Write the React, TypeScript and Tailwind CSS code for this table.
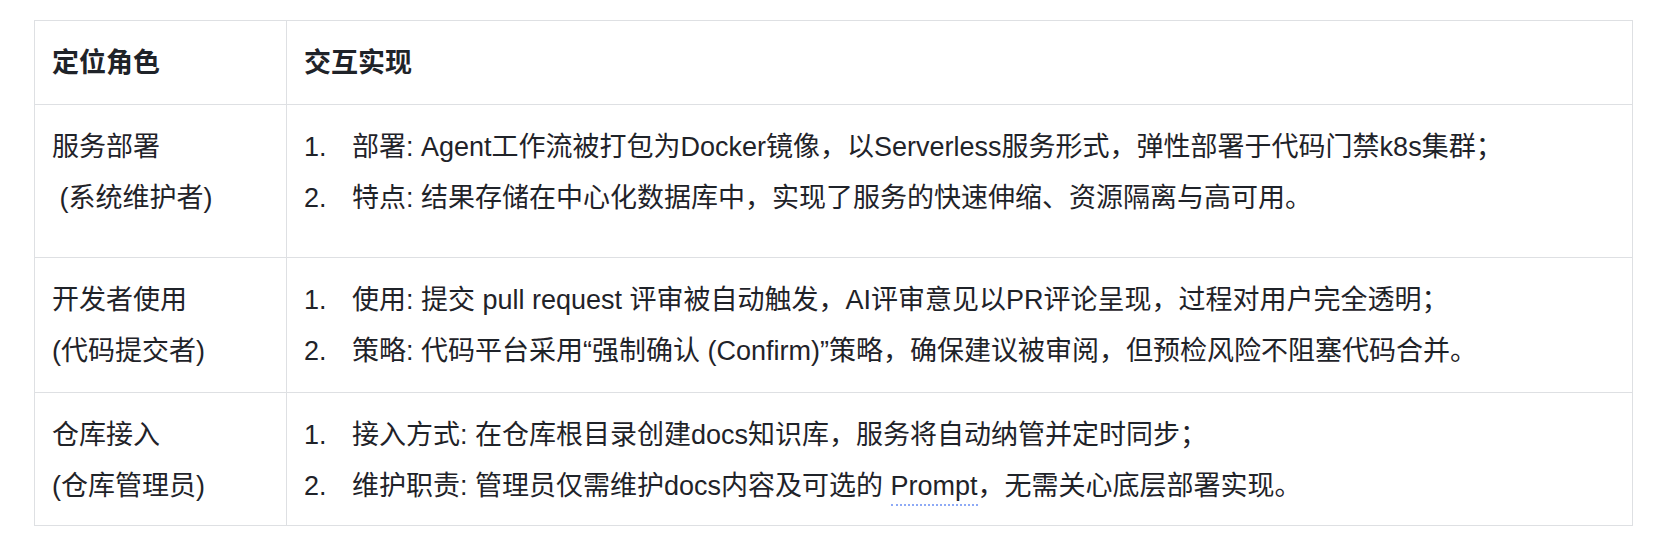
import React from 'react';

interface RoleRow {
  role: string;
  who: string;
  items: React.ReactNode[];
  pb: string;
}

const rows: RoleRow[] = [
  {
    role: '服务部署',
    who: ' (系统维护者)',
    items: [
      '部署: Agent工作流被打包为Docker镜像，以Serverless服务形式，弹性部署于代码门禁k8s集群；',
      '特点: 结果存储在中心化数据库中，实现了服务的快速伸缩、资源隔离与高可用。'
    ],
    pb: 'pb-[39px]'
  },
  {
    role: '开发者使用',
    who: '(代码提交者)',
    items: [
      '使用: 提交 pull request 评审被自动触发，AI评审意见以PR评论呈现，过程对用户完全透明；',
      '策略: 代码平台采用“强制确认 (Confirm)”策略，确保建议被审阅，但预检风险不阻塞代码合并。'
    ],
    pb: 'pb-[21px]'
  },
  {
    role: '仓库接入',
    who: '(仓库管理员)',
    items: [
      '接入方式: 在仓库根目录创建docs知识库，服务将自动纳管并定时同步；',
      <>
        维护职责: 管理员仅需维护docs内容及可选的{' '}
        <span className="border-b-2 border-dotted border-[#8eaaf6] pb-[3px]">Prompt</span>
        ，无需关心底层部署实现。
      </>
    ],
    pb: 'pb-[19px]'
  }
];

export default function App() {
  return (
    <div
      className="h-[552px] w-[1664px] bg-white pl-[34px] pt-[20px] text-[27px] leading-[40px] text-[#1f2329]"
      style={{ fontFamily: '"Liberation Sans", "Noto Sans CJK SC", sans-serif' }}
    >
      <div className="w-[1599px] border border-[#dee0e3]">
        {/* Header */}
        <div className="grid grid-cols-[251px_1fr] font-bold">
          <div className="pb-[21px] pl-[17px] pt-[22px]">定位角色</div>
          <div className="border-l border-[#dee0e3] pb-[21px] pl-[17px] pt-[22px]">交互实现</div>
        </div>

        {rows.map((row) => (
          <div key={row.role} className="grid grid-cols-[251px_1fr] border-t border-[#dee0e3]">
            <div className={`flex flex-col gap-[11px] pl-[17px] pt-[22px] ${row.pb}`}>
              <p>{row.role}</p>
              <p className="whitespace-pre">{row.who}</p>
            </div>
            <div
              className={`flex flex-col gap-[11px] border-l border-[#dee0e3] pl-[17px] pt-[22px] ${row.pb}`}
            >
              {row.items.map((item, i) => (
                <div key={i} className="flex">
                  <span className="w-[48px] shrink-0">{i + 1}.</span>
                  <span>{item}</span>
                </div>
              ))}
            </div>
          </div>
        ))}
      </div>
    </div>
  );
}
